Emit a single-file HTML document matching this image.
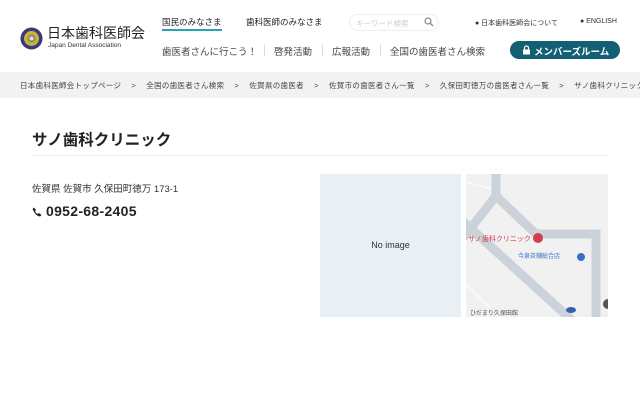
<!DOCTYPE html>
<html><head><meta charset="utf-8"><style>
*{margin:0;padding:0;box-sizing:border-box}
body{width:640px;height:400px;background:#fff;font-family:"Liberation Sans","Noto Sans CJK JP",sans-serif;color:#333;position:relative;overflow:hidden}
.a{position:absolute;white-space:nowrap}
</style></head><body>
<svg class="a" style="left:20px;top:27px" width="23" height="23" viewBox="0 0 23 23"><circle cx="11.5" cy="11.5" r="11" fill="#3a3a7a"/><circle cx="11.5" cy="11.5" r="7.5" fill="#c9b33a"/><circle cx="11.5" cy="11.5" r="4" fill="#8a8a5a"/><circle cx="11.5" cy="11.5" r="2" fill="#ddd"/></svg>
<div class="a" style="left:47px;top:25px;font-size:14px;line-height:16px;color:#222">日本歯科医師会</div>
<div class="a" style="left:48px;top:42px;font-size:6.5px;line-height:8px;color:#333">Japan Dental Association</div>
<div class="a" style="left:162px;top:16px;font-size:8.5px;color:#222">国民のみなさま</div>
<div class="a" style="left:162px;top:29px;width:60px;height:2px;background:#2aa3b8"></div>
<div class="a" style="left:246px;top:16px;font-size:8.5px;color:#222">歯科医師のみなさま</div>
<div class="a" style="left:349px;top:14px;width:90px;height:17px;border:1px solid #eee;border-radius:9px;font-size:7.5px;color:#ccc;padding:3px 0 0 6px">キーワード検索</div>
<svg class="a" style="left:424px;top:17px" width="10" height="10" viewBox="0 0 10 10"><circle cx="4" cy="4" r="3" fill="none" stroke="#888" stroke-width="1.2"/><path d="M6 6L9 9" stroke="#888" stroke-width="1.3"/></svg>
<div class="a" style="left:475px;top:18px;font-size:7px;color:#333">● 日本歯科医師会について</div>
<div class="a" style="left:580px;top:18px;font-size:7px;color:#333">● ENGLISH</div>
<div class="a" style="left:162px;top:44px;font-size:9.5px;color:#444">歯医者さんに行こう！</div>
<div class="a" style="left:264px;top:44px;width:1px;height:12px;background:#ddd"></div>
<div class="a" style="left:274px;top:44px;font-size:9.5px;color:#444">啓発活動</div>
<div class="a" style="left:322px;top:44px;width:1px;height:12px;background:#ddd"></div>
<div class="a" style="left:332px;top:44px;font-size:9.5px;color:#444">広報活動</div>
<div class="a" style="left:380px;top:44px;width:1px;height:12px;background:#ddd"></div>
<div class="a" style="left:390px;top:44px;font-size:9.5px;color:#444">全国の歯医者さん検索</div>
<div class="a" style="left:510px;top:41px;width:110px;height:18px;background:#135f73;border-radius:9px;color:#fff;font-size:9.5px;font-weight:bold;padding:3px 0 0 24px">メンバーズルーム</div>
<svg class="a" style="left:522px;top:45px" width="9" height="10" viewBox="0 0 9 10"><path d="M2.5 4.5V3a2 2 0 0 1 4 0v1.5" fill="none" stroke="#fff" stroke-width="1.2"/><rect x="1" y="4.5" width="7" height="5" fill="#fff"/></svg>
<div class="a" style="left:0;top:72px;width:640px;height:26px;background:#f2f2f2"></div>
<div class="a" style="left:20px;top:80px;font-size:7.5px;color:#444;letter-spacing:0.3px">日本歯科医師会トップページ　 &gt; 　全国の歯医者さん検索　 &gt; 　佐賀県の歯医者　 &gt; 　佐賀市の歯医者さん一覧　 &gt; 　久保田町徳万の歯医者さん一覧　 &gt; 　サノ歯科クリニック</div>
<div class="a" style="left:32px;top:128px;font-size:15.5px;font-weight:bold;color:#222">サノ歯科クリニック</div>
<div class="a" style="left:32px;top:155px;width:576px;height:1px;background:#eee"></div>
<div class="a" style="left:32px;top:181px;font-size:9.5px;color:#333">佐賀県 佐賀市 久保田町徳万 173-1</div>
<svg class="a" style="left:32px;top:207px" width="10" height="10" viewBox="0 0 10 10"><path d="M2 0.5L4 3 3 4.5Q4.5 6.5 5.5 7L7 6 9.5 8 8 9.5Q4 9.5 0.5 2Z" fill="#222"/></svg>
<div class="a" style="left:46px;top:203px;font-size:14px;font-weight:bold;color:#222;letter-spacing:0.3px">0952-68-2405</div>
<div class="a" style="left:320px;top:174px;width:141px;height:143px;background:#e8f0f6;font-size:9px;color:#333;text-align:center;padding-top:66px">No image</div>
<svg class="a" style="left:466px;top:174px" width="142" height="143" viewBox="0 0 142 143">
<rect x="0" y="0" width="142" height="143" fill="#f1f1f1"/>
<g stroke="#ccd2da" stroke-width="9" fill="none" stroke-linecap="square">
<path d="M30 0V22L70 60H130V143"/><path d="M0 50L110 150"/><path d="M30 22L0 60"/>
</g>
<g stroke="#fff" stroke-width="1" fill="none"><path d="M0 8L25 15"/><path d="M0 110L30 140"/></g>
<text x="2" y="67" font-size="7" fill="#d23c4c" font-family="Liberation Sans,Noto Sans CJK JP,sans-serif">サノ歯科クリニック</text>
<circle cx="72" cy="64" r="5" fill="#d23c4c"/>
<text x="52" y="84" font-size="6" fill="#3a6fc8" font-family="Liberation Sans,Noto Sans CJK JP,sans-serif">今泉茶舗総合店</text>
<circle cx="115" cy="83" r="4" fill="#3a6fc8"/>
<text x="4" y="141" font-size="6" fill="#555" font-family="Liberation Sans,Noto Sans CJK JP,sans-serif">ひだまり久保田館</text>
<ellipse cx="105" cy="136" rx="5" ry="3" fill="#3a5fa8"/>
<circle cx="142" cy="130" r="5" fill="#555"/>
</svg>
</body></html>
